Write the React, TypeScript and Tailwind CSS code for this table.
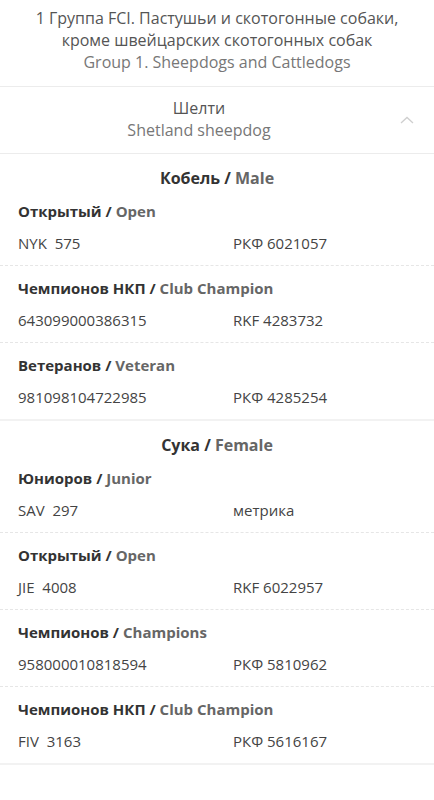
import React from "react";

type Entry = { ru: string; en: string; a: string; b: string };
type Section = { ru: string; en: string; entries: Entry[] };

const sections: Section[] = [
  {
    ru: "Кобель",
    en: "Male",
    entries: [
      { ru: "Открытый", en: "Open", a: "NYK  575", b: "РКФ 6021057" },
      { ru: "Чемпионов НКП", en: "Club Champion", a: "643099000386315", b: "RKF 4283732" },
      { ru: "Ветеранов", en: "Veteran", a: "981098104722985", b: "РКФ 4285254" },
    ],
  },
  {
    ru: "Сука",
    en: "Female",
    entries: [
      { ru: "Юниоров", en: "Junior", a: "SAV  297", b: "метрика" },
      { ru: "Открытый", en: "Open", a: "JIE  4008", b: "RKF 6022957" },
      { ru: "Чемпионов", en: "Champions", a: "958000010818594", b: "РКФ 5810962" },
      { ru: "Чемпионов НКП", en: "Club Champion", a: "FIV  3163", b: "РКФ 5616167" },
    ],
  },
];

export default function App() {
  return (
    <div
      className="w-[434px] min-h-[800px] bg-white text-[15px] leading-[22px] text-[#444]"
      style={{ fontFamily: '"Open Sans", "Noto Sans", sans-serif' }}
    >
      <div className="pt-[7px] pb-[13px] text-center text-[16px]">
        <div className="text-[#555]">1 Группа FCI. Пастушьи и скотогонные собаки,</div>
        <div className="text-[#555]">кроме швейцарских скотогонных собак</div>
        <div className="text-[#777]">Group 1. Sheepdogs and Cattledogs</div>
      </div>
      <div className="flex items-center border-t border-b border-[#ececec] pt-[10px] pb-[12px] pl-[18px] text-[16px]">
        <div className="flex-1 text-center">
          <div className="text-[#555]">Шелти</div>
          <div className="text-[#777]">Shetland sheepdog</div>
        </div>
        <div className="flex w-[54px] justify-center pt-[2px]">
          <svg width="14" height="8" viewBox="0 0 14 8" fill="none">
            <path d="M1 7 L7 1.5 L13 7" stroke="#cfcfcf" strokeWidth="1.3" />
          </svg>
        </div>
      </div>
      {sections.map((s, si) => (
        <div key={si} className={si > 0 ? "border-t-2 border-[#f2f2f2]" : ""}>
          <div className="pt-[13px] text-center text-[16px] font-bold text-[#333]">
            {s.ru} / <span className="text-[#666]">{s.en}</span>
          </div>
          {s.entries.map((e, ei) => (
            <div
              key={ei}
              className={
                "px-[18px] pt-[11px] pb-[11px] " +
                (ei < s.entries.length - 1 ? "border-b border-dashed border-[#e6e6e6]" : "")
              }
            >
              <div className="font-bold text-[#333]">
                {e.ru} / <span className="text-[#666]">{e.en}</span>
              </div>
              <div className="mt-[10px] grid grid-cols-[215px_1fr] whitespace-pre text-[#444]">
                <span>{e.a}</span>
                <span>{e.b}</span>
              </div>
            </div>
          ))}
        </div>
      ))}
      <div className="border-t-2 border-[#f2f2f2]" />
    </div>
  );
}
